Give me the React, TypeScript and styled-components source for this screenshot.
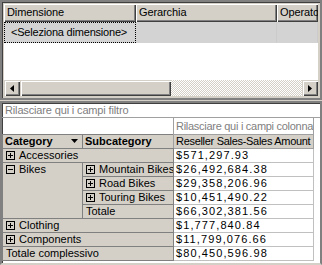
import React from "react";
import styled, { createGlobalStyle } from "styled-components";

const Global = createGlobalStyle`
  html, body { margin: 0; padding: 0; }
  body {
    background: #d4d0c8;
    font-family: "Liberation Sans", Arial, sans-serif;
    font-size: 11px;
    color: #000;
  }
  * { box-sizing: border-box; }
`;

const Page = styled.div`
  width: 322px;
  height: 265px;
  overflow: hidden;
  display: flex;
  flex-direction: column;
  gap: 1px;
  background: #d4d0c8;
`;

/* ---------- top field grid ---------- */
const FieldPanel = styled.div`
  height: 100px;
  border: 2px solid #808080;
  box-shadow: inset 1px 1px #404040;
  padding: 2px;
  background: #d4d0c8;
  display: flex;
  flex-direction: column;
`;

const GridBody = styled.div`
  flex: 1;
  display: flex;
  flex-direction: column;
  background: #fff;
  overflow: hidden;
`;

const GridRow = styled.div`
  display: flex;
  flex: none;
`;

const HeaderCell = styled.div<{ $w?: number }>`
  flex: ${(p) => (p.$w ? `0 0 ${p.$w}px` : "1 0 0")};
  height: 18px;
  line-height: 17px;
  padding-left: 3px;
  background: #d4d0c8;
  white-space: nowrap;
  overflow: hidden;
  letter-spacing: -0.1px;
  box-shadow: inset 1px 1px #fff, inset -1px -1px #404040, inset -2px -2px #808080;
`;

const SelectCell = styled.div<{ $w?: number; $focus?: boolean }>`
  flex: ${(p) => (p.$w ? `0 0 ${p.$w}px` : "1 0 0")};
  height: 21px;
  line-height: 19px;
  padding-left: 6px;
  background: #d3d3d3;
  white-space: nowrap;
  overflow: hidden;
  letter-spacing: -0.2px;
  border: 1px ${(p) => (p.$focus ? "dotted #000" : "solid #d3d3d3")};
  border-right-color: ${(p) => (p.$focus ? "#000" : "#cbcbcb")};
`;

const GridFill = styled.div`
  flex: 1;
  background: #fff;
`;

const ScrollBar = styled.div`
  height: 16px;
  display: flex;
  flex: none;
`;

const ScrollButton = styled.div`
  width: 16px;
  height: 16px;
  flex: none;
  background: #d4d0c8;
  display: flex;
  align-items: center;
  justify-content: center;
  box-shadow: inset 1px 1px #d4d0c8, inset 2px 2px #fff, inset -1px -1px #404040, inset -2px -2px #808080;
`;

const ScrollThumb = styled.div`
  width: 151px;
  height: 16px;
  flex: none;
  background: #d4d0c8;
  box-shadow: inset 1px 1px #d4d0c8, inset 2px 2px #fff, inset -1px -1px #404040, inset -2px -2px #808080;
`;

const ScrollTrack = styled.div`
  flex: 1;
  background-image: conic-gradient(#fff 25%, #d4d0c8 0 50%, #fff 0 75%, #d4d0c8 0);
  background-size: 2px 2px;
`;

/* ---------- pivot ---------- */
const PivotPanel = styled.div`
  flex: 1;
  border: 2px solid;
  border-color: #808080 #808080 #d4d0c8 #808080;
  box-shadow: inset 1px 1px #404040;
  background: #fff;
  display: flex;
  flex-direction: column;
  overflow: hidden;
`;

const FilterZone = styled.div`
  height: 15px;
  flex: none;
  line-height: 14px;
  padding-left: 3px;
  color: #808080;
  letter-spacing: -0.15px;
  border-bottom: 1px solid #a0a0a0;
  white-space: nowrap;
`;

const Table = styled.table`
  border-collapse: collapse;
  table-layout: fixed;
  width: 311px;
`;

const Blank = styled.td`
  padding: 0;
  height: 16px;
`;

const DropCell = styled.td`
  padding: 0 0 0 2px;
  height: 16px;
  line-height: 14px;
  color: #808080;
  letter-spacing: -0.28px;
  border: 1px solid #a0a0a0;
  border-top: none;
  white-space: nowrap;
  overflow: hidden;
`;

const HeadCell = styled.td<{ $sep?: boolean }>`
  padding: 0 0 0 2px;
  height: 14px;
  line-height: 13px;
  font-weight: bold;
  background: #d4d0c8;
  border: 1px solid #808080;
  border-left: ${(p) => (p.$sep ? "1px solid #f0f0f0" : "1px solid #808080")};
  border-right: ${(p) => (p.$sep ? "none" : "1px solid #808080")};
  white-space: nowrap;
  overflow: hidden;
`;

const HeadInner = styled.div`
  display: flex;
  align-items: center;
  justify-content: space-between;
  padding-right: 4px;
`;

const ValueHead = styled.td`
  padding: 0 0 0 2px;
  height: 14px;
  line-height: 13px;
  background: #d4d0c8;
  letter-spacing: -0.3px;
  border: 1px solid #a0a0a0;
  white-space: nowrap;
  overflow: hidden;
`;

const LabelCell = styled.td`
  padding: 0 0 0 2px;
  height: 14px;
  line-height: 13px;
  background: #d4d0c8;
  border: 1px solid #808080;
  vertical-align: top;
  white-space: nowrap;
  overflow: hidden;
`;

const LabelInner = styled.div`
  display: flex;
  align-items: center;
  gap: 4px;
  padding-left: 1px;
  height: 13px;
`;

const ValueCell = styled.td`
  padding: 0 0 0 2px;
  height: 14px;
  line-height: 13px;
  background: #fff;
  letter-spacing: 1.1px;
  border: 1px solid #c0c0c0;
  border-left-color: #808080;
  white-space: nowrap;
`;

const Expander = ({ open }: { open?: boolean }) => (
  <svg width="9" height="9" viewBox="0 0 9 9" style={{ flex: "none" }}>
    <rect x="0.5" y="0.5" width="8" height="8" fill="none" stroke="#000" />
    <path d="M2 4.5H7" stroke="#000" />
    {!open && <path d="M4.5 2V7" stroke="#000" />}
  </svg>
);

const DownArrow = () => (
  <svg width="7" height="4" viewBox="0 0 7 4">
    <polygon points="0,0 7,0 3.5,4" fill="#000" />
  </svg>
);

const LeftArrow = () => (
  <svg width="4" height="7" viewBox="0 0 4 7">
    <polygon points="4,0 4,7 0,3.5" fill="#000" />
  </svg>
);

const RightArrow = () => (
  <svg width="4" height="7" viewBox="0 0 4 7">
    <polygon points="0,0 0,7 4,3.5" fill="#000" />
  </svg>
);

const Label = ({ text, exp, open }: { text: string; exp?: boolean; open?: boolean }) => (
  <LabelInner>
    {exp && <Expander open={open} />}
    <span>{text}</span>
  </LabelInner>
);

export default function App() {
  return (
    <Page>
      <Global />
      <FieldPanel>
        <GridBody>
          <GridRow>
            <HeaderCell $w={132}>Dimensione</HeaderCell>
            <HeaderCell $w={141}>Gerarchia</HeaderCell>
            <HeaderCell>Operatore</HeaderCell>
          </GridRow>
          <GridRow>
            <SelectCell $w={132} $focus>&lt;Seleziona dimensione&gt;</SelectCell>
            <SelectCell $w={141} />
            <SelectCell />
          </GridRow>
          <GridFill />
          <ScrollBar>
            <ScrollButton>
              <LeftArrow />
            </ScrollButton>
            <ScrollThumb />
            <ScrollTrack />
            <ScrollButton>
              <RightArrow />
            </ScrollButton>
          </ScrollBar>
        </GridBody>
      </FieldPanel>
      <PivotPanel>
        <FilterZone>Rilasciare qui i campi filtro</FilterZone>
        <Table>
          <colgroup>
            <col style={{ width: 80 }} />
            <col style={{ width: 91 }} />
            <col style={{ width: 140 }} />
          </colgroup>
          <tbody>
            <tr>
              <Blank colSpan={2} />
              <DropCell>Rilasciare qui i campi colonna</DropCell>
            </tr>
            <tr>
              <HeadCell>
                <HeadInner>
                  <span>Category</span>
                  <DownArrow />
                </HeadInner>
              </HeadCell>
              <HeadCell $sep>Subcategory</HeadCell>
              <ValueHead>Reseller Sales-Sales Amount</ValueHead>
            </tr>
            <tr>
              <LabelCell colSpan={2}>
                <Label text="Accessories" exp />
              </LabelCell>
              <ValueCell>$571,297.93</ValueCell>
            </tr>
            <tr>
              <LabelCell rowSpan={4}>
                <Label text="Bikes" exp open />
              </LabelCell>
              <LabelCell>
                <Label text="Mountain Bikes" exp />
              </LabelCell>
              <ValueCell>$26,492,684.38</ValueCell>
            </tr>
            <tr>
              <LabelCell>
                <Label text="Road Bikes" exp />
              </LabelCell>
              <ValueCell>$29,358,206.96</ValueCell>
            </tr>
            <tr>
              <LabelCell>
                <Label text="Touring Bikes" exp />
              </LabelCell>
              <ValueCell>$10,451,490.22</ValueCell>
            </tr>
            <tr>
              <LabelCell>
                <Label text="Totale" />
              </LabelCell>
              <ValueCell>$66,302,381.56</ValueCell>
            </tr>
            <tr>
              <LabelCell colSpan={2}>
                <Label text="Clothing" exp />
              </LabelCell>
              <ValueCell>$1,777,840.84</ValueCell>
            </tr>
            <tr>
              <LabelCell colSpan={2}>
                <Label text="Components" exp />
              </LabelCell>
              <ValueCell>$11,799,076.66</ValueCell>
            </tr>
            <tr>
              <LabelCell colSpan={2}>
                <Label text="Totale complessivo" />
              </LabelCell>
              <ValueCell>$80,450,596.98</ValueCell>
            </tr>
          </tbody>
        </Table>
      </PivotPanel>
    </Page>
  );
}
